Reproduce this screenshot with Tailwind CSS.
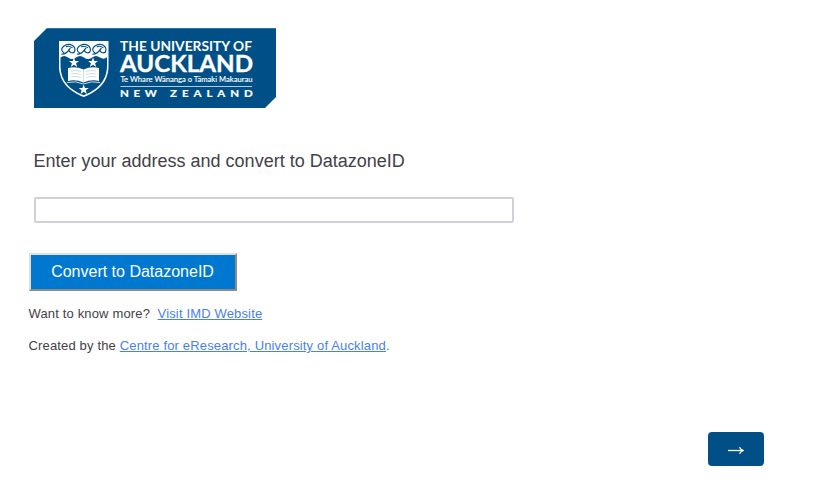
<!DOCTYPE html>
<html lang="en">
<head>
<meta charset="utf-8">
<title>Address to DatazoneID</title>
<script src="https://cdn.jsdelivr.net/npm/@tailwindcss/browser@4"></script>
</head>
<body class="bg-white font-['Liberation_Sans',Arial,sans-serif] text-[#424148]">
<main class="flex h-[489px] w-[829px] flex-col items-start overflow-hidden pt-7">
  <svg class="ml-[34px] h-20 w-[242px] shrink-0" viewBox="34 28 242 80" role="img" aria-label="The University of Auckland">
    <path d="M47 28H276V97L265 108H34V41Z" fill="#004f86"/>
    <path d="M47 28.5H276" stroke="#33739f" stroke-width="1"/>
    <path d="M59 41H108.500V66C108.500 82 98 91.500 83.700 97C69.500 91.500 59 82 59 66Z" fill="#fff"/>
    <path d="M60.500 57.500Q64 54.500 68 57.500Q72 60.500 76 57.500Q80 54.500 84 57.500Q88 60.500 92 57.500Q96 54.500 100 57.500Q104 60 107 57V66C107 81 97 90 83.700 95.300C70 90 60.500 81 60.500 66Z" fill="#004f86"/>
    <defs>
      <g id="wave" fill="none" stroke="#004f86" stroke-linecap="round" stroke-linejoin="round">
        <path d="M1.500 12C5 12 8.500 9 10.500 5.500M4 11Q0 8 2 5Q5 1 10 1.500Q16 3 15.500 8Q15 11 12 10.500Q9 10 9 7" stroke-width="1.200"/>
        <path d="M6 4Q9 2.500 12.500 5" stroke-width="1.100"/>
      </g>
      <path id="star" d="M0-5L1.300-1.600L5-1.500L2.100.8L3.100 4.400L0 2.300L-3.100 4.400L-2.100.8L-5-1.500L-1.300-1.600Z" fill="#fff"/>
    </defs>
    <use href="#wave" transform="translate(60.500 43) scale(.93)"/>
    <use href="#wave" transform="translate(76 43) scale(.93)"/>
    <use href="#wave" transform="translate(91.500 43) scale(.93)"/>
    <use href="#star" x="74" y="62.500"/>
    <use href="#star" x="93" y="62.500"/>
    <use href="#star" x="83.700" y="89.500"/>
    <path d="M68 68Q76 66 83.500 69.500Q91 66 99 68V81Q91 79 83.500 82.500Q76 79 68 81Z" fill="#fff"/>
    <path d="M83.500 69V83M71 71Q76 69.500 81 71.500M71 74Q76 72.500 81 74.500M71 77Q76 75.500 81 77.500M86 71.500Q91 69.500 96 71M86 74.500Q91 72.500 96 74M86 77.500Q91 75.500 96 77" fill="none" stroke="#9dbbd1" stroke-width=".5"/>
    <path d="M67 82.500Q76 80.500 83.500 84Q91 80.500 100 82.500" fill="none" stroke="#fff" stroke-width=".8"/>
    <g fill="#fff" class="font-['Lato',sans-serif]">
      <text x="120" y="50.500" font-size="13.300" font-weight="700" textLength="132" lengthAdjust="spacingAndGlyphs">THE UNIVERSITY OF</text>
      <text x="120" y="71.700" font-size="22.500" font-weight="700" stroke="#fff" stroke-width=".35" textLength="133" lengthAdjust="spacingAndGlyphs">AUCKLAND</text>
      <text x="120.500" y="82" font-size="8.300" font-weight="400" stroke="#fff" stroke-width=".15" textLength="132" lengthAdjust="spacingAndGlyphs">Te Whare Wānanga o Tāmaki Makaurau</text>
      <text transform="translate(120 96.500) scale(1.150 1)" font-size="10" font-weight="700" stroke="#fff" stroke-width=".2" textLength="32" lengthAdjust="spacing">NEW</text>
      <text transform="translate(170 96.500) scale(1.150 1)" font-size="10" font-weight="700" stroke="#fff" stroke-width=".2" textLength="72" lengthAdjust="spacing">ZEALAND</text>
    </g>
    <path d="M120.500 86.500H252" stroke="#b3cada" stroke-width="1"/>
  </svg>

  <label for="address" class="mt-[41px] ml-[33.5px] h-6 text-[18px] leading-6 whitespace-nowrap">Enter your address and convert to DatazoneID</label>
  <input id="address" type="text" class="mt-6 ml-[34px] h-[26px] w-[480px] shrink-0 rounded-[2px] border-2 border-[#d0d0d6] bg-white px-1 text-base outline-none">

  <button class="mt-[30px] ml-[29px] h-[38px] w-[208px] shrink-0 border-2 border-t-[#dedede] border-r-[#8b8b8b] border-b-[#8b8b8b] border-l-[#dedede] bg-[#0078d0] pr-px pb-px text-[16px] leading-6 text-white">Convert to DatazoneID</button>

  <p class="mt-[13px] ml-[28.5px] h-5 text-[13px] leading-5 tracking-[0.155px] whitespace-pre">Want to know more?  <a href="#" class="text-[#4a80ee] underline">Visit IMD Website</a></p>
  <p class="mt-3 ml-[28.5px] h-5 text-[13px] leading-5 tracking-[0.155px] whitespace-pre">Created by the <a href="#" class="text-[#4a80ee] underline">Centre for eResearch, University of Auckland</a><span class="text-[#4a80ee]">.</span></p>

  <button class="mt-[76px] ml-[708px] flex h-[34px] w-14 shrink-0 items-center justify-center rounded bg-[#004f86]" aria-label="Next">
    <svg class="h-4 w-4" viewBox="0 0 16 16" fill="none" stroke="#fff" stroke-width="1.300"><path d="M0 9.500H15"/><path d="M11.500 6.200Q12.500 8.500 15.300 9.500Q12.500 10.500 11.500 12.800"/></svg>
  </button>
</main>
</body>
</html>
